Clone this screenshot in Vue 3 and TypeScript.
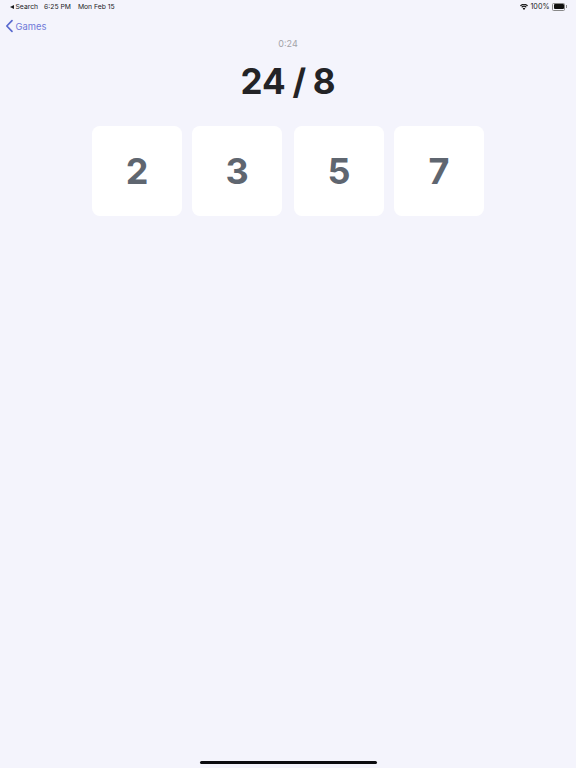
<script setup lang="ts">
const cards: number[] = [2, 3, 5, 7]
</script>

<template>
  <div class="screen">
    <div class="status">
      <div class="status-left">
        <span class="back-tri"></span>
        <span class="s-search">Search</span>
        <span class="s-time">6:25 PM</span>
        <span class="s-date">Mon Feb 15</span>
      </div>
      <div class="status-right">
        <svg class="wifi" width="8" height="6" viewBox="0 0 18 13">
          <path d="M9 13 L6 9.6 A4.6 4.6 0 0 1 12 9.6 Z" fill="#111" />
          <path d="M4.6 8 L3 6.2 A8.6 8.6 0 0 1 15 6.2 L13.4 8 A6.2 6.2 0 0 0 4.6 8 Z" fill="#111" />
          <path d="M1.7 4.8 L0 3 A13 13 0 0 1 18 3 L16.3 4.8 A10.6 10.6 0 0 0 1.7 4.8 Z" fill="#111" />
        </svg>
        <span class="s-pct">100%</span>
        <span class="battery"><span class="battery-fill"></span></span>
        <span class="battery-cap"></span>
      </div>
    </div>

    <div class="nav">
      <svg class="chevron" width="9" height="14" viewBox="0 0 9 14">
        <path d="M7 1.6 L1.8 7 L7 12.4" fill="none" stroke="#5a6acf" stroke-width="1.7" stroke-linecap="round" stroke-linejoin="round" />
      </svg>
      <span class="nav-label">Games</span>
    </div>

    <div class="timer">0:24</div>
    <h1 class="title">24 / 8</h1>

    <div class="cards">
      <div v-for="n in cards" :key="n" class="card">{{ n }}</div>
    </div>

    <div class="home-wrap"><div class="home"></div></div>
  </div>
</template>

<style>
html, body { margin: 0; padding: 0; background: #f4f4fc; }
</style>

<style scoped>
.screen {
  position: relative;
  width: 576px;
  height: 768px;
  background: #f4f4fc;
  font-family: Inter, "Liberation Sans", sans-serif;
  overflow: hidden;
  display: flex;
  flex-direction: column;
  align-items: center;
}
.status {
  align-self: stretch;
  height: 13px;
  padding: 0 9.5px 0 10px;
  display: flex;
  justify-content: space-between;
  align-items: center;
  font-size: 6.8px;
  font-weight: 400;
  color: #1c1c1e;
}
.status-left { display: flex; align-items: center; }
.back-tri {
  width: 0; height: 0;
  border-top: 2.5px solid transparent;
  border-bottom: 2.5px solid transparent;
  border-right: 4.5px solid #1c1c1e;
  margin-right: 1.5px;
}
.s-time { margin-left: 6px; }
.s-date { margin-left: 7px; }
.status-right { display: flex; align-items: center; }
.s-pct { margin-left: 2.5px; font-size: 7.2px; }
.battery {
  width: 10px; height: 5px;
  margin-left: 2.5px;
  padding: 0.5px;
  border: 0.5px solid #888;
  border-radius: 1.5px;
  box-sizing: content-box;
  display: flex;
}
.battery-fill { flex: 1; background: #111; border-radius: 1px; }
.battery-cap { width: 1px; height: 2.5px; background: #888; margin-left: 0.5px; }
.nav {
  align-self: stretch;
  height: 14px;
  margin-top: 6px;
  padding-left: 4.5px;
  display: flex;
  align-items: center;
  gap: 2px;
}
.chevron { flex: none; }
.nav-label { font-size: 9.4px; color: #6f79d8; }
.timer {
  margin-top: 5px;
  font-size: 9px;
  line-height: 12px;
  color: #a3a3a8;
}
.title {
  margin: 9px 0 0;
  font-size: 35px;
  line-height: 44px;
  font-weight: 700;
  color: #232326;
  word-spacing: -1.5px;
}
.cards {
  margin-top: 23px;
  display: flex;
  gap: 10px;
}
.card {
  width: 90px;
  height: 89.5px;
  border-radius: 8px;
  background: #fff;
  display: flex;
  align-items: center;
  justify-content: center;
  font-size: 36px;
  font-weight: 700;
  color: #5f6670;
}
.card:nth-child(3) { margin-left: 2px; }
.home-wrap {
  position: absolute;
  left: 0; right: 0; bottom: 4px;
  display: flex;
  justify-content: center;
}
.home {
  width: 177px;
  height: 3px;
  border-radius: 2px;
  background: #0c0c10;
}
</style>
